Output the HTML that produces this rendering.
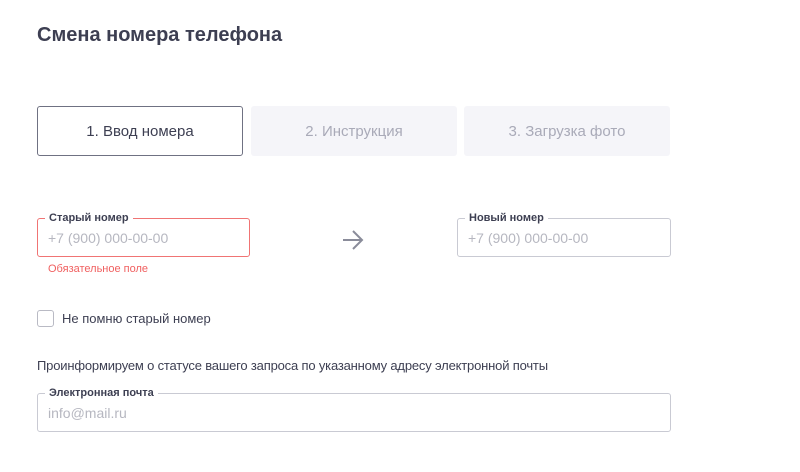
<!DOCTYPE html><html><head><meta charset="utf-8"><style>
body{margin:0;width:800px;height:472px;background:#fff;font-family:"Liberation Sans",sans-serif;position:relative;overflow:hidden;color:#3d3f52}
.a{position:absolute}
.tab{position:absolute;top:106px;height:50px;width:206px;box-sizing:border-box;border-radius:3px;display:flex;align-items:center;justify-content:center;font-size:15px}
.f{position:absolute;box-sizing:border-box;height:39px;border:1px solid #c9cad3;border-radius:3px}
.lb{position:absolute;top:-8px;left:7px;background:#fff;padding:0 4px;font-size:11px;font-weight:bold;color:#3d3f52;line-height:14px}
.ph{position:absolute;left:10px;top:11px;font-size:14px;color:#b6b7c0}
</style></head><body>
<div class="a" style="left:37px;top:24px;font-size:20px;font-weight:bold;color:#3d3f52">Смена номера телефона</div>
<div class="tab" style="left:37px;border:1px solid #6f7182;color:#3d3f52">1. Ввод номера</div>
<div class="tab" style="left:251px;background:#f5f5f9;color:#a9aab8">2. Инструкция</div>
<div class="tab" style="left:464px;background:#f5f5f9;color:#a9aab8">3. Загрузка фото</div>
<div class="f" style="left:37px;top:218px;width:213px;border-color:#f07474"><div class="lb">Старый номер</div><div class="ph">+7 (900) 000-00-00</div></div>
<div class="a" style="left:48px;top:263px;font-size:11px;color:#f06060">Обязательное поле</div>
<svg class="a" style="left:341px;top:229px" width="24" height="22" viewBox="0 0 24 22"><path d="M2 11H21M12 2L21 11L12 20" fill="none" stroke="#8a8c9a" stroke-width="2"/></svg>
<div class="f" style="left:457px;top:218px;width:214px"><div class="lb">Новый номер</div><div class="ph">+7 (900) 000-00-00</div></div>
<div class="a" style="left:37px;top:310px;width:17px;height:17px;box-sizing:border-box;border:1px solid #b9bac4;border-radius:3px"></div>
<div class="a" style="left:62px;top:311px;font-size:13px">Не помню старый номер</div>
<div class="a" style="left:37px;top:358px;font-size:13px;letter-spacing:-0.18px">Проинформируем о статусе вашего запроса по указанному адресу электронной почты</div>
<div class="f" style="left:37px;top:393px;width:634px"><div class="lb">Электронная почта</div><div class="ph">info@mail.ru</div></div>
</body></html>
